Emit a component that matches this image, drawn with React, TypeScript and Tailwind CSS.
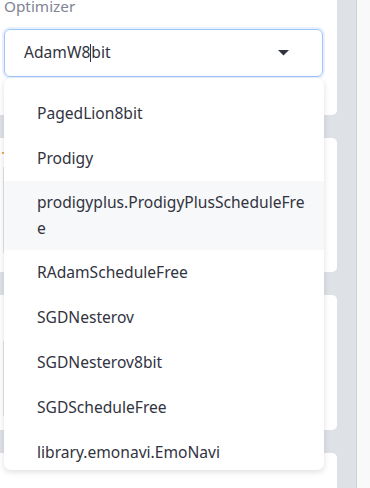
import React from "react";

const options = [
  "PagedAdamW8bit",
  "PagedLion8bit",
  "Prodigy",
  "prodigyplus.ProdigyPlusScheduleFree",
  "RAdamScheduleFree",
  "SGDNesterov",
  "SGDNesterov8bit",
  "SGDScheduleFree",
  "library.emonavi.EmoNavi",
];

const App = () => {
  return (
    <div
      className="relative w-[370px] h-[488px] overflow-hidden bg-[#f9f9f9] flex text-[#31333f]"
      style={{ fontFamily: '"Noto Sans", "Open Sans", sans-serif' }}
    >
      {/* main column */}
      <div className="w-[357px] h-full bg-[#dee2e6] border-r border-[#cdd1d5] flex flex-col gap-[23px]">
        {/* optimizer card */}
        <div className="w-[337px] h-[115px] shrink-0 bg-white rounded-br-[5px] pl-[4px]">
          <div className="-mt-[6px] text-[15.3px] leading-[24px] text-[#808495]">Optimizer</div>
          <div className="mt-[11px] w-[319px] h-[48px] rounded-[6px] border border-[#9ec5fb] shadow-[0_0_0_2px_#e8f1fd] flex items-center pl-[19px] pr-[33px]">
            <span className="text-[15.6px]">
              AdamW8
              <span className="inline-block w-px h-[18px] bg-[#31333f] align-[-4px]" />
              bit
            </span>
            <svg className="ml-auto" width="11" height="6" viewBox="0 0 11 6">
              <polygon points="0,0 11,0 5.5,5.5" fill="#31333f" />
            </svg>
          </div>
        </div>

        <div className="w-[337px] h-[134px] shrink-0 bg-white rounded-r-[5px] relative">
          <div className="absolute left-[2px] top-[14px] w-[2px] h-[2px] bg-[#f3a64a]" />
          <div className="mt-[29px] ml-[3px] h-[86px] border-l border-[#e2e4e8]" />
        </div>

        <div className="w-[337px] h-[135px] shrink-0 bg-white rounded-r-[5px]">
          <div className="mt-[46px] ml-[3px] h-[75px] border-l border-[#e2e4e8]" />
        </div>

        <div className="w-[337px] flex-1 bg-white rounded-tr-[5px]" />
      </div>

      {/* open dropdown menu */}
      <div className="absolute left-[4px] top-[78px] w-[320px] h-[392px] overflow-hidden bg-white rounded-[7px] shadow-[0_2px_6px_rgba(0,0,0,0.13)]">
        <div className="-mt-[32px]">
          {options.map((o) =>
            o === "prodigyplus.ProdigyPlusScheduleFree" ? (
              <div key={o} className="bg-[#f7f8f9] pl-[33px] py-[9px] text-[15.6px] leading-[25.5px]">
                <div className="whitespace-nowrap">prodigyplus.ProdigyPlusScheduleFre</div>
                <div>e</div>
              </div>
            ) : (
              <div key={o} className="pl-[33px] py-[10px] text-[15.6px] leading-[25px] whitespace-nowrap">
                {o}
              </div>
            )
          )}
        </div>
      </div>
    </div>
  );
};

export default App;
